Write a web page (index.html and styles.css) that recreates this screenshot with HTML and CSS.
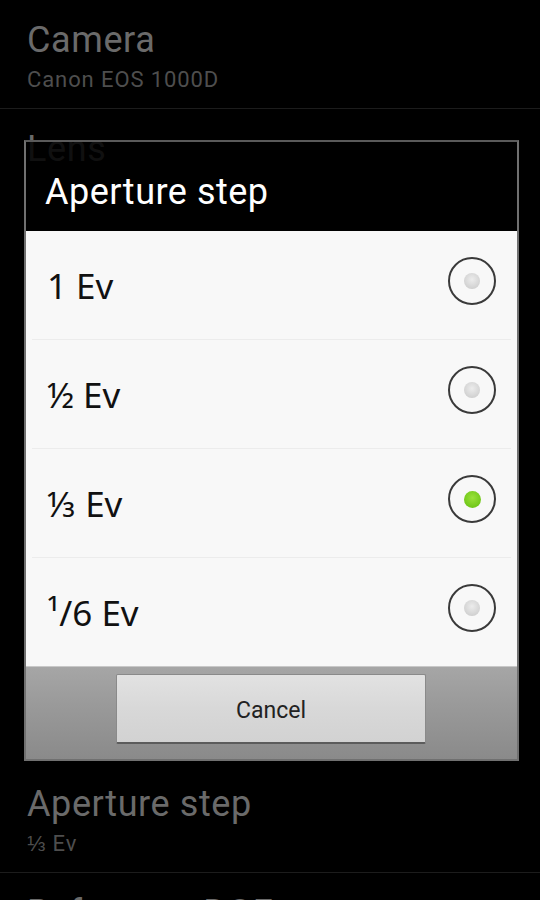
FILE: index.html
```html
<!DOCTYPE html>
<html lang="en">
<head>
    <meta charset="UTF-8">
    <meta name="viewport" content="width=device-width, initial-scale=1.0">
    <title>Aperture step</title>
    <link rel="stylesheet" href="styles.css">
</head>
<body>
    <div class="prefs">
        <div class="pref">
            <div class="pref-title">Camera</div>
            <div class="pref-summary">Canon EOS 1000D</div>
        </div>
        <!-- the dialog covers the rest of this block -->
        <div class="pref pref-lens">
            <div class="pref-title">Lens</div>
        </div>
        <div class="pref">
            <div class="pref-title">Aperture step</div>
            <div class="pref-summary">⅓ Ev</div>
        </div>
        <div class="pref">
            <div class="pref-title">Reference DOF</div>
            <div class="pref-summary">Off</div>
        </div>
    </div>

    <div class="dialog">
        <div class="dialog-title">Aperture step</div>
        <ul class="choices">
            <li class="choice"><span class="choice-label">1 Ev</span><span class="radio"></span></li>
            <li class="choice"><span class="choice-label">½ Ev</span><span class="radio"></span></li>
            <li class="choice"><span class="choice-label">⅓ Ev</span><span class="radio checked"></span></li>
            <li class="choice"><span class="choice-label">¹/6 Ev</span><span class="radio"></span></li>
        </ul>
        <div class="button-bar">
            <button class="cancel">Cancel</button>
        </div>
    </div>
</body>
</html>
```

FILE: styles.css
```css
body {
    margin: 0;
    background: #000;
    font-family: 'Roboto', sans-serif;
    width: 540px;
    height: 900px;
    overflow: hidden;
    position: relative;
}

.pref {
    height: 109px;
    box-sizing: border-box;
    padding: 18px 0 0 27px;
    border-bottom: 1px solid #1c1c1c;
}

.pref-lens {
    height: 655px;
    border-bottom-color: transparent;
}

.pref-title {
    font-size: 36px;
    line-height: 44px;
    letter-spacing: 0.6px;
    color: #6a6a6a;
}

.pref-summary {
    font-size: 22px;
    line-height: 36px;
    letter-spacing: 0.9px;
    color: #4e4e4e;
}

.dialog {
    position: absolute;
    left: 24px;
    top: 140px;
    width: 495px;
    box-sizing: border-box;
    border: 2px solid #707070;
    border-top-color: #5a5a5a;
}

.dialog-title {
    height: 89px;
    box-sizing: border-box;
    padding: 28px 0 0 19px;
    background: rgba(0, 0, 0, 0.85);
    color: #fff;
    font-size: 36px;
    line-height: 44px;
    letter-spacing: 0.5px;
}

.choices {
    list-style: none;
    margin: 0;
    padding: 0;
    background: #f8f8f8;
}

.choice {
    height: 108px;
    display: flex;
    align-items: center;
    justify-content: space-between;
    margin: 0 6px;
    padding: 0 15px;
    font-family: 'Noto Sans', sans-serif;
    font-size: 35px;
    color: #111;
    border-bottom: 1px solid #ececec;
}

.choice:last-child {
    border-bottom: none;
}

.choice-label {
    margin-top: 0;
}

.radio {
    width: 44px;
    height: 44px;
    border: 2px solid #3a3a3a;
    border-radius: 50%;
    display: flex;
    align-items: center;
    justify-content: center;
    margin-top: -8px;
}

.radio::after {
    content: '';
    width: 16px;
    height: 16px;
    border-radius: 50%;
    background: radial-gradient(circle at 50% 40%, #ececec, #d2d2d2 70%, #bcbcbc);
}

.radio.checked::after {
    width: 17px;
    height: 17px;
    background: radial-gradient(circle at 50% 40%, #9ae23a, #72c81a 70%, #5aa812);
}

.button-bar {
    height: 93px;
    box-sizing: border-box;
    padding: 7px 0 0 0;
    display: flex;
    justify-content: center;
    align-items: flex-start;
    background: linear-gradient(#a6a6a6, #9a9a9a 40%, #8a8a8a);
    border-top: 1px solid #c8c8c8;
}

.cancel {
    width: 310px;
    height: 70px;
    margin-left: -1px;
    padding-top: 5px;
    border: 1px solid #8a8a8a;
    border-bottom: 2px solid #5c5c5c;
    border-radius: 2px;
    background: linear-gradient(#e2e2e2, #d8d8d8 50%, #d2d2d2);
    font-family: 'Roboto', sans-serif;
    font-size: 23px;
    color: #222;
}
```
